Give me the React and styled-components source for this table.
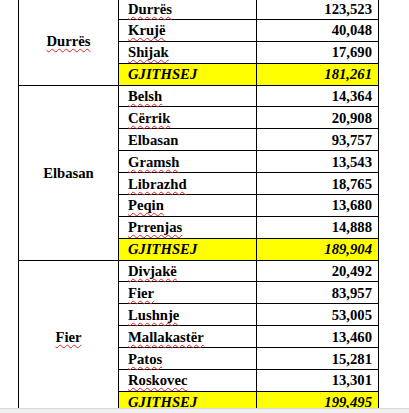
import React from "react";
import styled, { createGlobalStyle } from "styled-components";

const serif = `"Liberation Serif", "Times New Roman", serif`;

const GlobalStyle = createGlobalStyle`
  html, body {
    margin: 0;
    padding: 0;
    background: #ffffff;
    overflow: hidden;
  }
  body {
    font-family: ${serif};
    color: #000000;
  }
`;

const Page = styled.div`
  height: 413px;
  overflow: hidden;
  padding-left: 18px;
`;

const Table = styled.table`
  border-collapse: collapse;
  margin-top: -2.9px;
  font-family: ${serif};
  font-size: 14.67px;
  font-weight: bold;
  table-layout: fixed;
  width: 343px;
`;

const Row = styled.tr`
  height: 21.88px;
`;

const Cell = styled.td`
  border: 1px solid #000000;
  padding: 0;
  font-family: ${serif};
  font-size: 14.67px;
  font-weight: bold;
  line-height: 16px;
  white-space: nowrap;
  color: #000000;
  background: ${(p) => (p.$total ? "#ffff00" : "transparent")};
  font-style: ${(p) => (p.$total ? "italic" : "normal")};
`;

const RegionCell = styled(Cell)`
  width: 99px;
  text-align: center;
  vertical-align: middle;
`;

const NameCell = styled(Cell)`
  width: 128px;
  padding-left: 9px;
  text-align: left;
`;

const ValueCell = styled(Cell)`
  width: 115px;
  padding-right: 6px;
  text-align: right;
`;

const Word = styled.span`
  text-decoration: ${(p) => (p.$typo ? "underline wavy #e02020" : "none")};
  text-decoration-thickness: 0.8px;
  text-decoration-skip-ink: none;
  text-underline-offset: 2px;
`;

const StatusStrip = styled.div`
  position: fixed;
  left: 0;
  right: 0;
  bottom: 0;
  height: 4px;
  background: #f0f0f0;
  border-top: 1px solid #d9d9d9;
`;

const regions = [
  {
    name: "Durrës",
    typo: true,
    total: "181,261",
    items: [
      ["Durrës", "123,523", true],
      ["Krujë", "40,048", true],
      ["Shijak", "17,690", true],
    ],
  },
  {
    name: "Elbasan",
    typo: false,
    total: "189,904",
    items: [
      ["Belsh", "14,364", true],
      ["Cërrik", "20,908", true],
      ["Elbasan", "93,757", false],
      ["Gramsh", "13,543", true],
      ["Librazhd", "18,765", true],
      ["Peqin", "13,680", true],
      ["Prrenjas", "14,888", true],
    ],
  },
  {
    name: "Fier",
    typo: true,
    total: "199,495",
    items: [
      ["Divjakë", "20,492", true],
      ["Fier", "83,957", true],
      ["Lushnje", "53,005", true],
      ["Mallakastër", "13,460", true],
      ["Patos", "15,281", true],
      ["Roskovec", "13,301", true],
    ],
  },
];

const App = () => (
  <>
    <GlobalStyle />
    <Page>
      <Table>
        <tbody>
          {regions.map((region) => (
            <React.Fragment key={region.name}>
              {region.items.map(([name, value, typo], index) => (
                <Row key={name}>
                  {index === 0 && (
                    <RegionCell rowSpan={region.items.length + 1}>
                      <Word $typo={region.typo}>{region.name}</Word>
                    </RegionCell>
                  )}
                  <NameCell>
                    <Word $typo={typo}>{name}</Word>
                  </NameCell>
                  <ValueCell>{value}</ValueCell>
                </Row>
              ))}
              <Row>
                <NameCell $total>GJITHSEJ</NameCell>
                <ValueCell $total>{region.total}</ValueCell>
              </Row>
            </React.Fragment>
          ))}
        </tbody>
      </Table>
    </Page>
    <StatusStrip />
  </>
);

export default App;
